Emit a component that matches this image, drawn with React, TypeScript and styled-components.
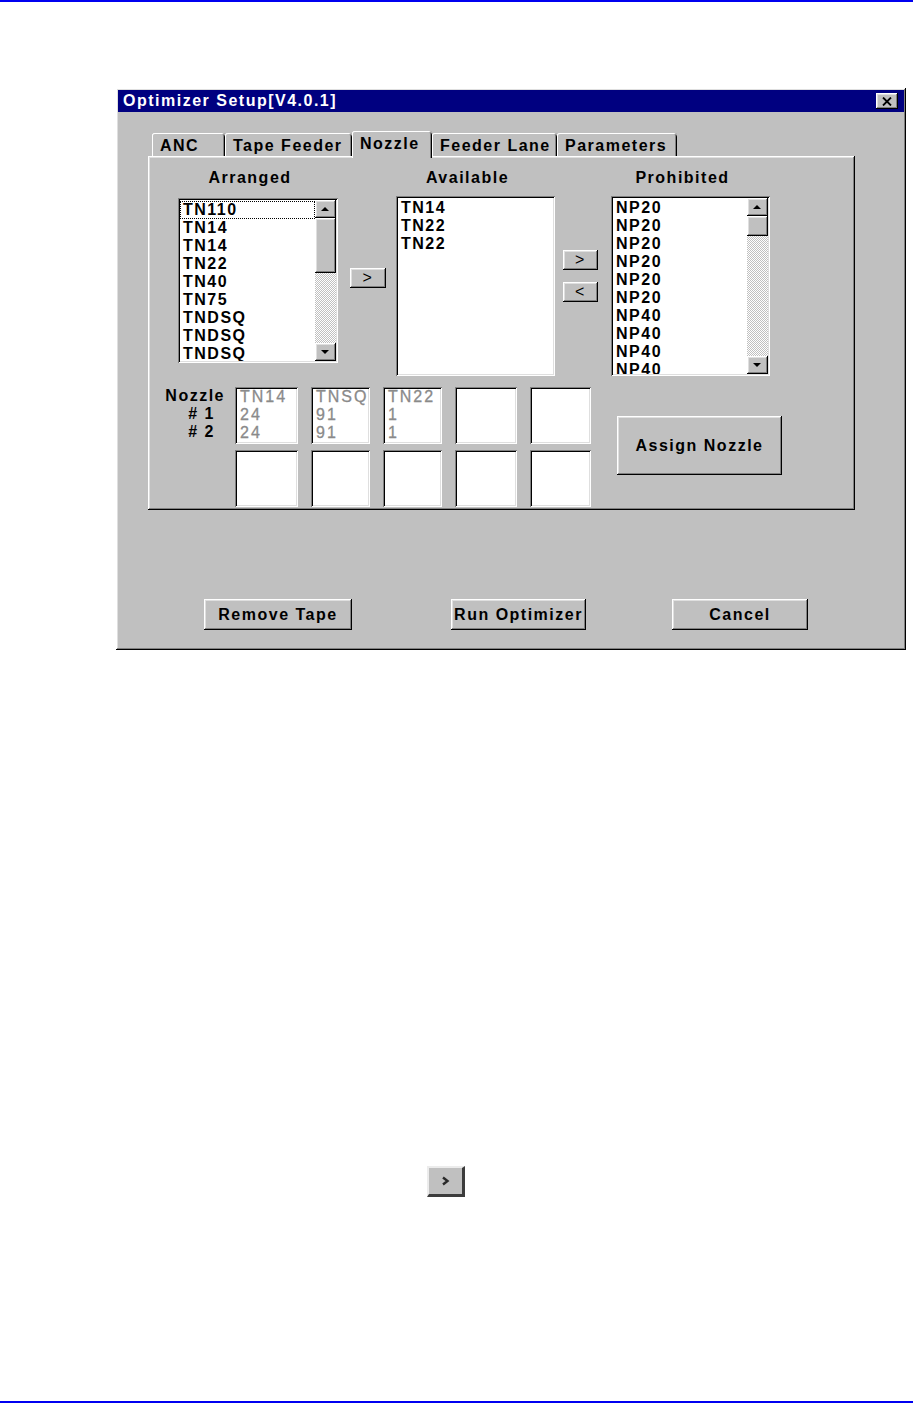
import styled, { createGlobalStyle, css } from 'styled-components'

const GlobalStyle = createGlobalStyle`
  html, body {
    margin: 0;
    padding: 0;
    background: #fff;
  }
  body {
    font-family: 'Liberation Sans', Arial, sans-serif;
  }
`

const uiFont = css`
  font-family: 'Liberation Sans', Arial, sans-serif;
  font-size: 16px;
  font-weight: bold;
  line-height: 18px;
  letter-spacing: 1.5px;
  color: #000;
`

const raised = css`
  background: #c0c0c0;
  box-shadow: inset -1px -1px #000, inset 1px 1px #fff, inset -2px -2px #808080,
    inset 2px 2px #dfdfdf;
`

const sunken = css`
  background: #fff;
  box-shadow: inset 1px 1px #808080, inset -1px -1px #fff, inset 2px 2px #000,
    inset -2px -2px #dfdfdf;
`

const Page = styled.div`
  height: 1403px;
  display: flex;
  flex-direction: column;
`

const Rule = styled.div`
  flex-shrink: 0;
  height: 2px;
  background: #0000f0;
`

const Spacer = styled.div`
  flex: 1;
`

const Window = styled.div`
  ${raised}
  ${uiFont}
  box-sizing: border-box;
  width: 790px;
  height: 562px;
  margin: 86px 0 0 116px;
  padding: 2px;
  display: flex;
  flex-direction: column;
`

const TitleBar = styled.div`
  height: 22px;
  background: #000080;
  color: #fff;
  display: flex;
  align-items: center;
  justify-content: space-between;
  padding: 0 6px 0 5px;
`

const TitleText = styled.span`
  color: #fff;
`

const CloseButton = styled.div`
  ${raised}
  width: 22px;
  height: 16px;
  display: flex;
  align-items: center;
  justify-content: center;
`

const Body = styled.div`
  flex: 1;
  padding: 19px 0 0 30px;
  display: flex;
  flex-direction: column;
`

const TabStrip = styled.div`
  height: 25px;
  display: flex;
  align-items: flex-end;
  padding-left: 4px;
  position: relative;
  z-index: 1;
`

const Tab = styled.div<{ $w: number; $active?: boolean }>`
  box-sizing: border-box;
  width: ${({ $w }) => $w}px;
  height: ${({ $active }) => ($active ? 27 : 23)}px;
  margin-bottom: ${({ $active }) => ($active ? -2 : 0)}px;
  padding: 4px 0 0 8px;
  background: #c0c0c0;
  border-radius: 3px 3px 0 0;
  box-shadow: inset 1px 0 #fff, inset 0 1px #fff, inset -1px 0 #000,
    inset -2px 0 #808080;
  white-space: nowrap;
`

const Panel = styled.div`
  box-sizing: border-box;
  width: 707px;
  height: 354px;
  padding: 13px 0 0 14px;
  background: #c0c0c0;
  box-shadow: inset -1px -1px #000, inset 1px 1px #fff, inset -2px -2px #808080,
    inset 2px 2px #dfdfdf;
`

const ListsRow = styled.div`
  display: flex;
  align-items: flex-start;
  margin-left: 16px;
`

const ListGroup = styled.div<{ $w: number }>`
  width: ${({ $w }) => $w}px;
  display: flex;
  flex-direction: column;
  align-items: center;
`

const GroupLabel = styled.div`
  padding-right: 16px;
  margin-bottom: 9px;
  white-space: nowrap;
`

const ListBox = styled.div<{ $h: number; $mt?: number }>`
  ${sunken}
  box-sizing: border-box;
  width: 100%;
  height: ${({ $h }) => $h}px;
  margin-top: ${({ $mt }) => $mt ?? 0}px;
  padding: 2px;
  display: flex;
  overflow: hidden;
`

const Items = styled.div`
  flex: 1;
  overflow: hidden;
  padding-top: 1px;
`

const Item = styled.div<{ $focus?: boolean }>`
  height: 18px;
  padding-left: 3px;
  white-space: nowrap;
  outline: ${({ $focus }) => ($focus ? '1px dotted #000' : 'none')};
  outline-offset: -1px;
`

const ScrollBar = styled.div`
  width: 21px;
  display: flex;
  flex-direction: column;
`

const ScrollArrow = styled.div`
  ${raised}
  height: 18px;
  flex-shrink: 0;
  display: flex;
  align-items: center;
  justify-content: center;
`

const Thumb = styled.div<{ $h: number }>`
  ${raised}
  height: ${({ $h }) => $h}px;
  flex-shrink: 0;
`

const Track = styled.div`
  flex: 1;
  background: repeating-conic-gradient(#c0c0c0 0 25%, #fff 0 50%) 0 0 / 2px 2px;
`

const MoveColumn = styled.div<{ $mt: number; $ml: number; $mr: number }>`
  display: flex;
  flex-direction: column;
  gap: 12px;
  margin: ${({ $mt, $ml, $mr }) => `${$mt}px ${$mr}px 0 ${$ml}px`};
`

const MoveButton = styled.div<{ $w: number }>`
  ${raised}
  width: ${({ $w }) => $w}px;
  height: 20px;
  display: flex;
  align-items: center;
  justify-content: center;
  font-weight: normal;
`

const NozzleRow = styled.div`
  display: flex;
  align-items: flex-start;
  margin-top: 11px;
`

const NozzleLabels = styled.div`
  width: 63px;
  text-align: right;
`

const NozzleLabel = styled.div<{ $pr?: number }>`
  padding-right: ${({ $pr }) => $pr ?? 0}px;
  white-space: nowrap;
`

const NozzleGrid = styled.div`
  display: grid;
  grid-template-columns: 63px 59px 59px 62px 61px;
  grid-auto-rows: 57px;
  column-gap: 13px;
  row-gap: 6px;
  margin-left: 10px;
`

const NozzleSlot = styled.div`
  ${sunken}
  padding: 1px 3px 0 5px;
  color: #8a8a8a;
  font-weight: normal;
  letter-spacing: 2px;
  overflow: hidden;
  white-space: nowrap;
  -webkit-text-stroke: 0.3px #8a8a8a;
`

const PushButton = styled.div<{ $w: number; $h: number; $ml?: number; $mt?: number }>`
  ${raised}
  width: ${({ $w }) => $w}px;
  height: ${({ $h }) => $h}px;
  margin-left: ${({ $ml }) => $ml ?? 0}px;
  margin-top: ${({ $mt }) => $mt ?? 0}px;
  flex-shrink: 0;
  display: flex;
  align-items: center;
  justify-content: center;
  white-space: nowrap;
`

const ButtonRow = styled.div`
  display: flex;
  margin-top: 89px;
  padding-left: 56px;
`

const SmallButton = styled.div`
  box-sizing: border-box;
  width: 38px;
  height: 31px;
  margin: 516px 0 0 427px;
  background: #c0c0c0;
  border-top: 2px solid #ececec;
  border-left: 2px solid #ececec;
  border-right: 3px solid #3c3c3c;
  border-bottom: 3px solid #3c3c3c;
  display: flex;
  align-items: center;
  justify-content: center;
`

const Triangle = ({ down }: { down?: boolean }) => (
  <svg width="9" height="5" viewBox="0 0 9 5">
    <polygon points={down ? '0,0 8,0 4,4' : '4,0 8,4 0,4'} fill="#000" />
  </svg>
)

const CloseGlyph = () => (
  <svg width="10" height="9" viewBox="0 0 10 9">
    <path d="M1 0.5 L9 8.5 M9 0.5 L1 8.5" stroke="#000" strokeWidth="1.8" />
  </svg>
)

const Chevron = () => (
  <svg width="9" height="10" viewBox="0 0 9 10">
    <path d="M2 1.5 L6.5 5 L2 8.5" stroke="#2a2a2a" strokeWidth="2.4" fill="none" />
  </svg>
)

interface ListProps {
  items: string[]
  height: number
  top?: number
  focusIndex?: number
  thumb?: number
}

const List = ({ items, height, top, focusIndex, thumb }: ListProps) => (
  <ListBox $h={height} $mt={top}>
    <Items>
      {items.map((item, i) => (
        <Item key={i} $focus={i === focusIndex}>
          {item}
        </Item>
      ))}
    </Items>
    {thumb !== undefined && (
      <ScrollBar>
        <ScrollArrow>
          <Triangle />
        </ScrollArrow>
        <Thumb $h={thumb} />
        <Track />
        <ScrollArrow>
          <Triangle down />
        </ScrollArrow>
      </ScrollBar>
    )}
  </ListBox>
)

const tabs = [
  { label: 'ANC', w: 73 },
  { label: 'Tape Feeder', w: 127 },
  { label: 'Nozzle', w: 80, active: true },
  { label: 'Feeder Lane', w: 125 },
  { label: 'Parameters', w: 120 },
]

const arranged = ['TN110', 'TN14', 'TN14', 'TN22', 'TN40', 'TN75', 'TNDSQ', 'TNDSQ', 'TNDSQ']
const available = ['TN14', 'TN22', 'TN22']
const prohibited = ['NP20', 'NP20', 'NP20', 'NP20', 'NP20', 'NP20', 'NP40', 'NP40', 'NP40', 'NP40']

const slots: string[][] = [
  ['TN14', '24', '24'],
  ['TNSQ', '91', '91'],
  ['TN22', '1', '1'],
  [],
  [],
  [],
  [],
  [],
  [],
  [],
]

const App = () => (
  <Page>
    <GlobalStyle />
    <Rule />
    <Window>
      <TitleBar>
        <TitleText>Optimizer Setup[V4.0.1]</TitleText>
        <CloseButton>
          <CloseGlyph />
        </CloseButton>
      </TitleBar>
      <Body>
        <TabStrip>
          {tabs.map((t) => (
            <Tab key={t.label} $w={t.w} $active={t.active}>
              {t.label}
            </Tab>
          ))}
        </TabStrip>
        <Panel>
          <ListsRow>
            <ListGroup $w={160}>
              <GroupLabel>Arranged</GroupLabel>
              <List items={arranged} height={165} top={2} focusIndex={0} thumb={55} />
            </ListGroup>
            <MoveColumn $mt={99} $ml={12} $mr={10}>
              <MoveButton $w={36}>&gt;</MoveButton>
            </MoveColumn>
            <ListGroup $w={159}>
              <GroupLabel>Available</GroupLabel>
              <List items={available} height={180} />
            </ListGroup>
            <MoveColumn $mt={81} $ml={8} $mr={13}>
              <MoveButton $w={35}>&gt;</MoveButton>
              <MoveButton $w={35}>&lt;</MoveButton>
            </MoveColumn>
            <ListGroup $w={159}>
              <GroupLabel>Prohibited</GroupLabel>
              <List items={prohibited} height={180} thumb={20} />
            </ListGroup>
          </ListsRow>
          <NozzleRow>
            <NozzleLabels>
              <NozzleLabel>Nozzle</NozzleLabel>
              <NozzleLabel $pr={10}># 1</NozzleLabel>
              <NozzleLabel $pr={10}># 2</NozzleLabel>
            </NozzleLabels>
            <NozzleGrid>
              {slots.map((lines, i) => (
                <NozzleSlot key={i}>
                  {lines.map((l, j) => (
                    <div key={j}>{l}</div>
                  ))}
                </NozzleSlot>
              ))}
            </NozzleGrid>
            <PushButton $w={165} $h={59} $ml={26} $mt={29}>
              Assign Nozzle
            </PushButton>
          </NozzleRow>
        </Panel>
        <ButtonRow>
          <PushButton $w={148} $h={31}>
            Remove Tape
          </PushButton>
          <PushButton $w={135} $h={31} $ml={99}>
            Run Optimizer
          </PushButton>
          <PushButton $w={136} $h={31} $ml={86}>
            Cancel
          </PushButton>
        </ButtonRow>
      </Body>
    </Window>
    <SmallButton>
      <Chevron />
    </SmallButton>
    <Spacer />
    <Rule />
  </Page>
)

export default App
